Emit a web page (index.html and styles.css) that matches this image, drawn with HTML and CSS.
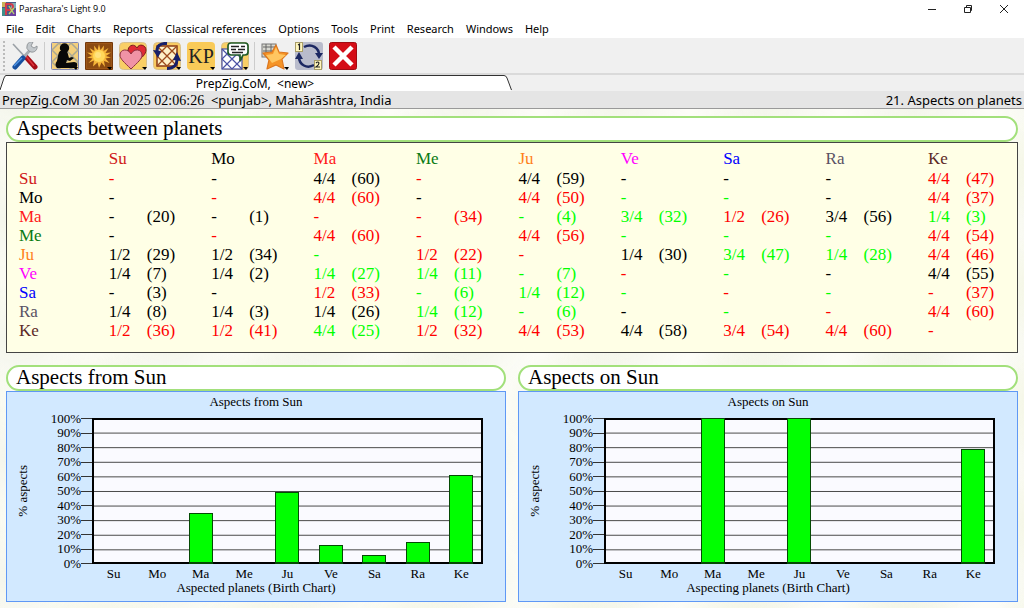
FILE: index.html
```html
<!DOCTYPE html>
<html lang="en">
<head>
<meta charset="utf-8">
<title>Parashara's Light 9.0</title>
<link rel="stylesheet" href="styles.css">
</head>
<body>
<header class="titlebar">
  <svg class="app-icon" viewBox="0 0 14 14" aria-hidden="true"><rect width="14" height="14" fill="#4d5a86"/><rect x="0" y="0" width="4" height="5" fill="#c9b35a"/><rect x="9" y="1" width="5" height="5" fill="#7fb0b8"/><rect x="8" y="8" width="6" height="6" fill="#6b3fa0"/><rect x="0" y="6" width="3" height="8" fill="#3f8f8a"/><path d="M4 13V2h4a3 3 0 0 1 0 6H5" fill="none" stroke="#d23b4c" stroke-width="2"/><path d="M7 4l5 8M12 6l-5 6" stroke="#b7d36a" stroke-width="1.4"/></svg>
  <h1 class="app-title">Parashara's Light 9.0</h1>
  <div class="window-controls">
    <button type="button" aria-label="Minimize"><svg viewBox="0 0 10 10"><path d="M1 5.500h8"/></svg></button>
    <button type="button" aria-label="Restore"><svg viewBox="0 0 10 10"><path d="M1.500 3.500h6v5h-6zM3.500 3V1.500h5v5H8"/></svg></button>
    <button type="button" aria-label="Close"><svg viewBox="0 0 10 10"><path d="M1 1l8 8M9 1l-8 8"/></svg></button>
  </div>
</header>
<nav class="menubar" aria-label="Main menu">
  <button type="button">File</button><button type="button">Edit</button><button type="button">Charts</button><button type="button">Reports</button><button type="button">Classical references</button><button type="button">Options</button><button type="button">Tools</button><button type="button">Print</button><button type="button">Research</button><button type="button">Windows</button><button type="button">Help</button>
</nav>
<div class="toolbar" role="toolbar" aria-label="Tools">
  <span class="grip"></span>
  <button type="button" aria-label="Settings"><svg viewBox="0 0 28 28"><path d="M2 2l13 14" stroke="#9aa0a6" stroke-width="1.600"/><path d="M15 15l9 10" stroke="#a50d17" stroke-width="5" stroke-linecap="round"/><path d="M15 14l8 10" stroke="#e0353d" stroke-width="1.500"/><path d="M12 16L20 7" stroke="#a9aeb3" stroke-width="3"/><path d="M18 9a5 5 0 0 1 4-9l-2 4 3 2 3-2a5 5 0 0 1-6 6z" fill="#c3c8cc" stroke="#84898d" stroke-width=".8"/><path d="M12 16L4 25" stroke="#174f9f" stroke-width="5" stroke-linecap="round"/><path d="M11 16l-8 8" stroke="#4f94e2" stroke-width="1.500"/></svg></button>
  <span class="separator"></span>
  <button type="button" aria-label="Birth data"><svg viewBox="0 0 28 28"><rect x=".5" y=".5" width="27" height="27" rx="1" fill="#f3cf7c" stroke="#7f86b5"/><path d="M1 8L8 1l19 19M1 20L20 1l7 7-19 19-7-7M1 8l19 19 7-7" fill="none" stroke="#a9a894" stroke-width="1.500"/><circle cx="13.500" cy="6" r="4.700" fill="#080808"/><path d="M9 9h6c2 1 2 4 3 7l3-1 2 1-4 3-3-1-1 3 8-1c4 0 4 4 2 6H6c-2-2-2-5 0-7 1-4 1-8 3-10z" fill="#080808"/><path d="M22 25h5l-2 3z"/></svg></button>
  <button type="button" aria-label="Sun chart"><svg viewBox="0 0 28 28"><rect width="28" height="28" rx="1" fill="#74380a"/><rect x="1.500" y="1.500" width="25" height="25" fill="#8c4b12" stroke="#9c5618"/><path d="M14 2l1.500 6L19 3.500 18.500 9l5-3-3 5 5.500-.5-5 3.500 5 1.500-5.500 1 4 4.500-5.500-2 1 6-3.500-4.500L14 26l-1.500-5.500L8 24.500l1-6-5.500 2.500 4-4.500-5.500-1 5-1.500-5-3.500 5.500.5-3-5 5 3L9 3.500 12.500 8z" fill="#f6b63a"/><circle cx="14" cy="14" r="6" fill="#ffd85a"/><circle cx="13" cy="13" r="3" fill="#ffe27e"/><path d="M22 25h5l-2 3z"/></svg></button>
  <button type="button" aria-label="Compatibility"><svg viewBox="0 0 28 28"><rect x=".5" y=".5" width="27" height="27" rx="4" fill="#f9cf66" stroke="#d8c08c"/><path d="M18 19C11 14 9 11 9 8c1-6 7-6 9-2 2-5 9-3 9 2 0 4-4 8-9 11z" fill="#e02a35" stroke="#7a1d1d"/><path d="M12 27C5 20 1 17 1 13c0-6 8-7 11-1 3-6 11-5 11 1 0 4-4 7-11 14z" fill="#f093a5" stroke="#8c3040"/><path d="M23 25h5l-2 3z"/></svg></button>
  <button type="button" aria-label="Transits"><svg viewBox="0 0 28 28"><rect x=".5" y=".5" width="27" height="27" rx="4" fill="#f8ca62" stroke="#d8c08c"/><rect x="4" y="4" width="20" height="20" fill="#fff1c8" stroke="#8a3a16" stroke-width="1.500"/><path d="M4 14L14 4l10 10-10 10zM4 4l20 20M24 4L4 24" fill="none" stroke="#9c4a1c" stroke-width="1.300"/><path d="M14 1.500C7 1 4 4 4 9M14 26.500c7 0 10-4 10-9" fill="none" stroke="#17206a" stroke-width="3"/><path d="M0 8l8 1-3 7zM28 19l-8-1 4-8z" fill="#17206a"/><path d="M23 25h5l-2 3z"/></svg></button>
  <button type="button" class="kp" aria-label="KP system"><span>KP</span><svg viewBox="0 0 28 28"><path d="M23 25h5l-2 3z"/></svg></button>
  <button type="button" aria-label="Interpretations"><svg viewBox="0 0 28 28"><rect x=".5" y=".5" width="27" height="27" rx="4" fill="#f9cf66" stroke="#d8c08c"/><rect x="1" y="7" width="20" height="20" fill="#fff" stroke="#4a52a4" stroke-width="1.200"/><path d="M1 17L11 7l10 10-10 10zM1 7l20 20M21 7L1 27" fill="none" stroke="#4a52a4" stroke-width="1.200"/><path d="M10 1h14q3 0 3 3v6q0 3-3 3h-2l-3 6 0-6h-9q-3 0-3-3V4q0-3 3-3z" fill="#fff" stroke="#215b28" stroke-width="1.700"/><path d="M10 4.500h8m2 0h4M10 7.500h5m2 0h7M11 10.500h11" stroke="#222" stroke-width="1.400"/><path d="M22 25h5l-2 3z"/></svg></button>
  <span class="separator"></span>
  <button type="button" aria-label="Favorites"><svg viewBox="0 0 28 28"><rect x="1" y="2" width="14" height="13" fill="#d8d8d0" stroke="#777"/><path d="M2 5h12M2 9h12M5 2v12M10 2v12" stroke="#666"/><path d="M15 3l3 7 9 1-6 6 2 10-8-4-9 4 2-9-6-7 9-1z" fill="#f59427" stroke="#dc761e" stroke-width="1.200" stroke-linejoin="round"/><path d="M15 5l3 7 7 1-5 4-9 4-6-8 7-1z" fill="#ffc661"/><path d="M23 25h5l-2 3z"/></svg></button>
  <button type="button" aria-label="Switch chart"><svg viewBox="0 0 28 28"><rect width="28" height="28" rx="3" fill="#b9bccc"/><path d="M9 5c8-4 15 1 15 8M19 23C12 27 4 23 4 15" fill="none" stroke="#1c2862" stroke-width="2.500"/><path d="M20 11h8l-4 6zM0 17h8l-4-7z" fill="#1c2862"/><rect x=".5" y=".5" width="7" height="9" fill="#fff6bd" stroke="#a89d68"/><rect x="19.500" y="18.500" width="7" height="9" fill="#fff6bd" stroke="#a89d68"/><path d="M3 3l1.500-1v6M21 21q2-2 3 0 0 2-3 4h4" fill="none" stroke="#222" stroke-width="1.200"/></svg></button>
  <button type="button" aria-label="Close chart"><svg viewBox="0 0 28 28"><rect x=".5" y=".5" width="27" height="27" rx="2" fill="#d40d17" stroke="#a10b12"/><path d="M5 5l18 18M23 5L5 23" stroke="#fff" stroke-width="4.500"/></svg></button>
</div>
<div class="tabstrip" role="tablist">
  <button type="button" class="tab" role="tab" aria-selected="true">
    <svg class="tab-left" viewBox="0 0 6 16"><path d="M0 16V15L4 3Q5 .5 6 .5V16z" fill="#fff"/><path d="M0 15L4 3Q5 .5 6 .5" fill="none" stroke="#333"/></svg>
    <span class="tab-label">PrepZig.CoM,&nbsp; &lt;new&gt;</span>
    <svg class="tab-right" viewBox="0 0 8 16"><path d="M0 .5Q2 .5 3 3L7 16H0z" fill="#fff"/><path d="M0 .5Q2 .5 3 3L7.500 15" fill="none" stroke="#333"/></svg>
  </button>
</div>
<div class="infobar">
  <p>PrepZig.CoM <span class="birth-time">30 Jan 2025 02:06:26</span>&nbsp; &lt;punjab&gt;, Mahārāshtra, India</p>
  <p>21. Aspects on planets</p>
</div>
<main class="workspace">
  <section>
    <h2 class="heading">Aspects between planets</h2>
    <div class="aspects-panel">
    <table class="aspects">
      <thead><tr><td></td><th scope="col" class="su">Su</th><th scope="col">Mo</th><th scope="col" class="ma">Ma</th><th scope="col" class="me">Me</th><th scope="col" class="ju">Ju</th><th scope="col" class="ve">Ve</th><th scope="col" class="sa">Sa</th><th scope="col" class="ra">Ra</th><th scope="col" class="ke">Ke</th></tr></thead>
      <tbody>
      <tr><th scope="row" class="su">Su</th><td class="bad"><b>-</b></td><td><b>-</b></td><td><b>4/4</b>(60)</td><td class="bad"><b>-</b></td><td><b>4/4</b>(59)</td><td><b>-</b></td><td><b>-</b></td><td><b>-</b></td><td class="bad"><b>4/4</b>(47)</td></tr>
      <tr><th scope="row">Mo</th><td><b>-</b></td><td class="bad"><b>-</b></td><td class="bad"><b>4/4</b>(60)</td><td><b>-</b></td><td class="bad"><b>4/4</b>(50)</td><td class="good"><b>-</b></td><td class="good"><b>-</b></td><td><b>-</b></td><td class="bad"><b>4/4</b>(37)</td></tr>
      <tr><th scope="row" class="ma">Ma</th><td><b>-</b>(20)</td><td><b>-</b>(1)</td><td class="bad"><b>-</b></td><td class="bad"><b>-</b>(34)</td><td class="good"><b>-</b>(4)</td><td class="good"><b>3/4</b>(32)</td><td class="bad"><b>1/2</b>(26)</td><td><b>3/4</b>(56)</td><td class="good"><b>1/4</b>(3)</td></tr>
      <tr><th scope="row" class="me">Me</th><td><b>-</b></td><td class="bad"><b>-</b></td><td class="bad"><b>4/4</b>(60)</td><td class="bad"><b>-</b></td><td class="bad"><b>4/4</b>(56)</td><td class="good"><b>-</b></td><td class="good"><b>-</b></td><td class="good"><b>-</b></td><td class="bad"><b>4/4</b>(54)</td></tr>
      <tr><th scope="row" class="ju">Ju</th><td><b>1/2</b>(29)</td><td><b>1/2</b>(34)</td><td class="good"><b>-</b></td><td class="bad"><b>1/2</b>(22)</td><td class="bad"><b>-</b></td><td><b>1/4</b>(30)</td><td class="good"><b>3/4</b>(47)</td><td class="good"><b>1/4</b>(28)</td><td class="bad"><b>4/4</b>(46)</td></tr>
      <tr><th scope="row" class="ve">Ve</th><td><b>1/4</b>(7)</td><td><b>1/4</b>(2)</td><td class="good"><b>1/4</b>(27)</td><td class="good"><b>1/4</b>(11)</td><td class="good"><b>-</b>(7)</td><td class="bad"><b>-</b></td><td class="good"><b>-</b></td><td><b>-</b></td><td><b>4/4</b>(55)</td></tr>
      <tr><th scope="row" class="sa">Sa</th><td><b>-</b>(3)</td><td><b>-</b></td><td class="bad"><b>1/2</b>(33)</td><td class="good"><b>-</b>(6)</td><td class="good"><b>1/4</b>(12)</td><td class="good"><b>-</b></td><td class="bad"><b>-</b></td><td class="good"><b>-</b></td><td class="bad"><b>-</b>(37)</td></tr>
      <tr><th scope="row" class="ra">Ra</th><td><b>1/4</b>(8)</td><td><b>1/4</b>(3)</td><td><b>1/4</b>(26)</td><td class="good"><b>1/4</b>(12)</td><td class="good"><b>-</b>(6)</td><td><b>-</b></td><td class="good"><b>-</b></td><td class="bad"><b>-</b></td><td class="bad"><b>4/4</b>(60)</td></tr>
      <tr><th scope="row" class="ke">Ke</th><td class="bad"><b>1/2</b>(36)</td><td class="bad"><b>1/2</b>(41)</td><td class="good"><b>4/4</b>(25)</td><td class="bad"><b>1/2</b>(32)</td><td class="bad"><b>4/4</b>(53)</td><td><b>4/4</b>(58)</td><td class="bad"><b>3/4</b>(54)</td><td class="bad"><b>4/4</b>(60)</td><td class="bad"><b>-</b></td></tr>
      </tbody>
    </table>
    </div>
  </section>
  <div class="charts">
    <section>
      <h2 class="heading">Aspects from Sun</h2>
      <figure class="chart">
        <h3 class="chart-title">Aspects from Sun</h3>
        <span class="y-title">% aspects</span>
        <ul class="y-axis"><li>100%</li><li>90%</li><li>80%</li><li>70%</li><li>60%</li><li>50%</li><li>40%</li><li>30%</li><li>20%</li><li>10%</li><li>0%</li></ul>
        <div class="plot">
          <i></i><i></i><i class="bar" style="height:35%"></i><i></i><i class="bar" style="height:49%"></i><i class="bar" style="height:13%"></i><i class="bar" style="height:6%"></i><i class="bar" style="height:15%"></i><i class="bar" style="height:61%"></i>
        </div>
        <ul class="x-axis"><li>Su</li><li>Mo</li><li>Ma</li><li>Me</li><li>Ju</li><li>Ve</li><li>Sa</li><li>Ra</li><li>Ke</li></ul>
        <figcaption>Aspected planets (Birth Chart)</figcaption>
      </figure>
    </section>
    <section>
      <h2 class="heading">Aspects on Sun</h2>
      <figure class="chart">
        <h3 class="chart-title">Aspects on Sun</h3>
        <span class="y-title">% aspects</span>
        <ul class="y-axis"><li>100%</li><li>90%</li><li>80%</li><li>70%</li><li>60%</li><li>50%</li><li>40%</li><li>30%</li><li>20%</li><li>10%</li><li>0%</li></ul>
        <div class="plot">
          <i></i><i></i><i class="bar" style="height:100%"></i><i></i><i class="bar" style="height:100%"></i><i></i><i></i><i></i><i class="bar" style="height:79%"></i>
        </div>
        <ul class="x-axis"><li>Su</li><li>Mo</li><li>Ma</li><li>Me</li><li>Ju</li><li>Ve</li><li>Sa</li><li>Ra</li><li>Ke</li></ul>
        <figcaption>Aspecting planets (Birth Chart)</figcaption>
      </figure>
    </section>
  </div>
</main>
</body>
</html>
```
FILE: styles.css
```css
* { box-sizing: border-box; }
body {
  margin: 0;
  min-height: 100vh;
  display: flex;
  flex-direction: column;
  background: #fff;
  color: #000;
  font: 12px/16px "Noto Sans", sans-serif;
}
h1, h2, h3, p, ul, figure { margin: 0; padding: 0; font-weight: normal; }
ul { list-style: none; }
button {
  padding: 0;
  border: 0;
  background: none;
  color: inherit;
  font: inherit;
}
svg { display: block; }

.titlebar { display: flex; align-items: center; gap: 3px; height: 18px; padding-left: 2px; }
.app-icon { width: 14px; height: 14px; }
.app-title { font: 9px/16px "Open Sans", sans-serif; }
.window-controls { display: flex; gap: 26px; margin-left: auto; padding-right: 15px; }
.window-controls svg { width: 10px; height: 10px; fill: none; stroke: #222; }

.menubar {
  display: flex;
  align-items: center;
  gap: 12px;
  height: 20px;
  padding: 1px 0 0 6px;
  font-size: 11px;
}

.toolbar {
  display: flex;
  align-items: center;
  gap: 6px;
  height: 37px;
  padding-left: 3px;
  background: #f0f0f0;
  border-bottom: 2px solid #dadada;
}
.toolbar button { width: 28px; height: 28px; flex: none; }
.toolbar svg { width: 28px; height: 28px; }
.grip { width: 2px; height: 30px; background: repeating-linear-gradient(#bbb 0 2px, transparent 2px 4px); }
.separator { width: 1px; height: 28px; background: #ccc; margin-left: -1px; }
.toolbar .kp { display: grid; border-radius: 4px; background: #f9ca58; }
.kp > * { grid-area: 1 / 1; place-self: center; }
.kp span { font: 20px/28px "Liberation Serif", serif; color: #222; }

.tabstrip { display: flex; height: 16px; background: #f0f0f0; }
.tab { display: flex; width: 50%; height: 16px; }
.tab-left { width: 6px; height: 16px; }
.tab-right { width: 8px; height: 16px; }
.tab-label { flex: 1; height: 16px; line-height: 16px; background: #fff; border-top: 1px solid #333; }

.infobar {
  display: flex;
  justify-content: space-between;
  height: 18px;
  padding: 0 2px;
  background: #e5e5e5;
  border-bottom: 1px solid #999;
  font-size: 13px;
  line-height: 18px;
}
.birth-time { font-family: "Liberation Serif", serif; font-size: 14px; }

.workspace {
  flex: 1;
  display: flex;
  flex-direction: column;
  gap: 12px;
  padding: 7px 6px 4px;
  font-family: "Liberation Serif", serif;
  background:
    radial-gradient(ellipse, #f1f4df 10%, transparent 70%) 20px 0 / 160px 118px,
    radial-gradient(ellipse, #f4f6ec 10%, transparent 70%) 90px 50px / 150px 120px,
    #fdfdf8;
}
.heading {
  height: 26px;
  padding-left: 8px;
  border: 2px solid #a2e07b;
  border-radius: 13px;
  background: #fff;
  font-size: 21px;
  line-height: 20px;
}
.aspects-panel {
  padding: 6px 0 12px 12px;
  border: 1px solid #444;
  background: #ffffe6;
}
.aspects { width: 100%; table-layout: fixed; border-collapse: collapse; font-size: 17px; line-height: 19px; }
.aspects td, .aspects th { width: 10.26%; padding: 0; text-align: left; font-weight: normal; white-space: nowrap; }
.aspects td:first-child, .aspects th:first-child { width: 9%; }
.aspects td:last-child, .aspects th:last-child { width: auto; }
.aspects thead { line-height: 20px; }
.aspects b { display: inline-block; width: 38px; font-weight: normal; }
.aspects .su { color: #d01818; }
.aspects .ma { color: #ff1a1a; }
.aspects .me { color: #0a7a14; }
.aspects .ju { color: #ff7f1a; }
.aspects .ve { color: #f0f; }
.aspects .sa { color: #00f; }
.aspects .ra { color: #5a5264; }
.aspects .ke { color: #5c2a26; }
.bad { color: #f00; }
.good { color: #0f0; }

.charts { display: grid; grid-template-columns: 1fr 1fr; gap: 12px; }
.chart {
  display: grid;
  grid-template-columns: 16px 50px 11px 1fr;
  padding: 2px 22px 5px 8px;
  border: 1px solid #5f98f5;
  background: #d2e9ff;
  font-size: 13px;
  line-height: 16px;
  text-align: center;
}
.chart-title { grid-column: 1 / -1; margin: 0 -22px 8px -8px; font-size: 13px; line-height: 16px; }
.y-title { grid-column: 1; place-self: center; writing-mode: vertical-rl; transform: rotate(180deg); }
.y-axis { grid-column: 2 / 4; display: flex; flex-direction: column; justify-content: space-between; }
.y-axis li { display: flex; align-items: center; justify-content: flex-end; height: 1px; }
.y-axis li::after { content: ""; width: 11px; height: 1px; background: #333; }
.plot {
  display: grid;
  grid-template-columns: repeat(9, 1fr);
  align-items: end;
  justify-items: center;
  height: 146px;
  background: linear-gradient(#444 1px, transparent 1px) 0 0 / 100% 10%, #fafaff;
  box-shadow: inset 0 0 0 2px #000;
}
.bar { width: 24px; background: #0f0; border: 1px solid #044a04; border-bottom-width: 2px; }
.x-axis { grid-column: 4; display: grid; grid-template-columns: repeat(9, 1fr); margin-top: 2px; }
.chart figcaption { grid-column: 1 / -1; margin: -2px -22px 0 -8px; }
```
